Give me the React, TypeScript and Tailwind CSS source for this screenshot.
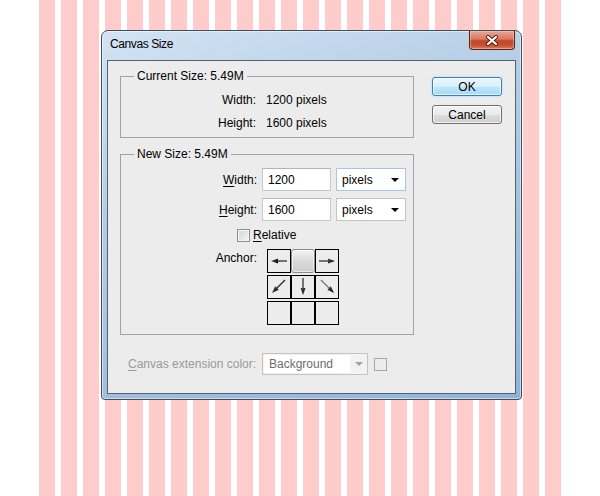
import React from "react";

type ArrowDir = "l" | "r" | "dl" | "d" | "dr";

function AnchorArrow({ dir }: { dir: ArrowDir }) {
  const shapes: Record<ArrowDir, { line: [number, number, number, number]; head: string; stroke: string }> = {
    l: { line: [9, 11, 19, 11], head: "3,11 10,8.5 10,13.5", stroke: "#222" },
    r: { line: [3, 11, 13, 11], head: "19,11 12,8.5 12,13.5", stroke: "#222" },
    d: { line: [11, 2, 11, 13], head: "11,19 8.5,12 13.5,12", stroke: "#222" },
    dl: { line: [17, 4, 8, 13], head: "4,17 10.7,13.8 7.2,10.3", stroke: "#222" },
    dr: { line: [5, 4, 14, 13], head: "18,17 11.3,13.8 14.8,10.3", stroke: "#777" },
  };
  const s = shapes[dir];
  return (
    <svg width="22" height="22" viewBox="0 0 22 22">
      <defs>
        <linearGradient id={`ah-${dir}`} x1="0" y1="0" x2="1" y2="1">
          <stop offset="0" stopColor="#555" />
          <stop offset="1" stopColor="#000" />
        </linearGradient>
      </defs>
      <line x1={s.line[0]} y1={s.line[1]} x2={s.line[2]} y2={s.line[3]} stroke={s.stroke} strokeWidth="1.2" />
      <polygon points={s.head} fill={`url(#ah-${dir})`} />
    </svg>
  );
}

function Cell({ children }: { children?: React.ReactNode }) {
  return (
    <div className="flex h-[24px] w-[24px] items-center justify-center border border-black bg-[#ececec]">
      {children}
    </div>
  );
}

function CloseButton() {
  return (
    <div className="mr-[1px] flex h-[19px] w-[46px] items-center justify-center rounded-b-[4px] border border-t-0 border-[#5e2215] bg-[linear-gradient(to_bottom,#e9a797_0%,#d9785f_45%,#c2432a_55%,#c9512f_80%,#dc8060_100%)] shadow-[inset_0_0_0_1px_rgba(255,210,190,0.45)]">
      <svg width="14" height="11" viewBox="0 0 14 11">
        <path d="M3,2 L11,9 M11,2 L3,9" stroke="#4a1b10" strokeWidth="4" strokeLinecap="round" />
        <path d="M3,2 L11,9 M11,2 L3,9" stroke="#ffffff" strokeWidth="2.2" strokeLinecap="round" />
      </svg>
    </div>
  );
}

function Caret({ color = "#000" }: { color?: string }) {
  return (
    <svg width="8" height="4" viewBox="0 0 8 4">
      <polygon points="0,0 8,0 4,4" fill={color} />
    </svg>
  );
}

function UnitSelect({ focused }: { focused?: boolean }) {
  return (
    <div
      className={
        focused
          ? "ml-[5px] flex h-[23px] w-[70px] items-center justify-between border border-[#a6c6e3] bg-white pl-[5px] pr-[6px]"
          : "ml-[5px] flex h-[23px] w-[70px] items-center justify-between border border-[#c4c4c4] bg-white pl-[5px] pr-[6px]"
      }
    >
      <span>pixels</span>
      <Caret />
    </div>
  );
}

function NumberField({ value }: { value: string }) {
  return (
    <div className="ml-[5px] flex h-[23px] w-[69px] items-center border border-[#c9c9c9] border-t-[#b5b5b5] bg-white pl-[5px]">
      {value}
    </div>
  );
}

export default function App() {
  return (
    <div className="relative h-[496px] w-[600px] overflow-hidden bg-white font-['Liberation_Sans',Arial,sans-serif] text-[12px] leading-[14px] text-black">
      {/* striped canvas behind the dialog */}
      <div className="flex h-full gap-[6px] pl-[39px]">
        {Array.from({ length: 24 }, (_, i) => (
          <div key={i} className="h-full w-[16px] shrink-0 bg-[#ffcccc]" />
        ))}
      </div>

      {/* dialog window */}
      <div className="absolute left-[101px] top-[30px] flex h-[370px] w-[421px] flex-col rounded-t-[7px] rounded-b-[4px] border border-[#3e4d5c] bg-[linear-gradient(160deg,#d3e3f3_0%,#b4cde6_35%,#a0bfdd_70%,#8fb3d8_100%)] px-[5px] pb-[5px] shadow-[inset_0_0_0_1px_rgba(255,255,255,0.5)]">
        <div className="flex h-[29px] shrink-0 items-start justify-between">
          <span className="pl-[3px] pt-[6px] tracking-[-0.4px]">Canvas Size</span>
          <CloseButton />
        </div>

        <div className="flex h-[334px] shrink-0 border border-[#56636f] bg-[#ececec]">
          {/* left column: size groups */}
          <div className="flex flex-col pl-[12px]">
            <fieldset className="mt-[8px] w-[294px] border border-[#a3a3a3] px-0 pb-[6px]">
              <legend className="ml-[13px] px-[3px] leading-[14px]">Current Size: 5.49M</legend>
              <div className="grid grid-cols-[135px_1fr] gap-y-[7px] pt-[9px] leading-[16px]">
                <div className="text-right">Width:</div>
                <div className="pl-[10px]">1200 pixels</div>
                <div className="text-right">Height:</div>
                <div className="pl-[10px]">1600 pixels</div>
              </div>
            </fieldset>

            <fieldset className="mt-[9px] w-[294px] border border-[#a3a3a3] px-0 pb-[9px]">
              <legend className="ml-[13px] px-[3px] leading-[14px]">New Size: 5.49M</legend>
              <div className="flex flex-col pt-[7px]">
                <div className="flex items-center">
                  <div className="w-[136px] text-right">
                    <span className="underline underline-offset-2">W</span>idth:
                  </div>
                  <NumberField value="1200" />
                  <UnitSelect focused />
                </div>
                <div className="mt-[7px] flex items-center">
                  <div className="w-[136px] text-right">
                    <span className="underline underline-offset-2">H</span>eight:
                  </div>
                  <NumberField value="1600" />
                  <UnitSelect />
                </div>
                <div className="mt-[6px] flex h-[16px] items-center pl-[116px]">
                  <div className="h-[13px] w-[13px] border border-[#8e8f8f] bg-[linear-gradient(135deg,#d4d4d4,#f6f6f6)] shadow-[inset_0_0_0_1px_#f4f4f4]" />
                  <span className="ml-[3px]">
                    <span className="underline underline-offset-2">R</span>elative
                  </span>
                </div>
                <div className="mt-[6px] flex items-start">
                  <div className="w-[136px] pt-[2px] text-right">Anchor:</div>
                  <div className="ml-[10px] grid grid-cols-[24px_24px_24px] gap-y-[2px]">
                    <Cell>
                      <AnchorArrow dir="l" />
                    </Cell>
                    <div className="h-[24px] w-[24px] rounded-[3px] border border-[#8c8c8c] bg-[linear-gradient(to_bottom,#f3f3f3,#dadada_50%,#cfcfcf)] shadow-[inset_0_0_0_1px_rgba(255,255,255,0.6)]" />
                    <Cell>
                      <AnchorArrow dir="r" />
                    </Cell>
                    <Cell>
                      <AnchorArrow dir="dl" />
                    </Cell>
                    <Cell>
                      <AnchorArrow dir="d" />
                    </Cell>
                    <Cell>
                      <AnchorArrow dir="dr" />
                    </Cell>
                    <Cell />
                    <Cell />
                    <Cell />
                  </div>
                </div>
              </div>
            </fieldset>

            <div className="mt-[18px] flex items-center pl-[8px]">
              <div className="w-[134px] text-[#9a9a9a]">
                <span className="underline underline-offset-2">C</span>anvas extension color:
              </div>
              <div className="flex h-[22px] w-[106px] items-center border border-[#c3c3c3] bg-[#f2f2f2]">
                <div className="ml-[1px] flex h-[18px] w-[86px] items-center bg-white pl-[5px] text-[#6d6d6d]">
                  Background
                </div>
                <div className="flex flex-1 items-center justify-center">
                  <Caret color="#a0a0a0" />
                </div>
              </div>
              <div className="ml-[6px] h-[13px] w-[13px] border border-[#a8a8a8] bg-[#ececec]" />
            </div>
          </div>

          {/* right column: buttons */}
          <div className="ml-[18px] flex flex-col pt-[16px]">
            <button className="flex h-[19px] w-[70px] items-center justify-center rounded-[3px] border border-[#3c7fb1] bg-[linear-gradient(to_bottom,#eaf6fd_0%,#d9f0fc_50%,#bee6fd_51%,#a7d9f5_100%)] shadow-[inset_0_0_0_1px_rgba(255,255,255,0.7),0_0_2px_#8fd0f5]">
              OK
            </button>
            <button className="mt-[9px] flex h-[19px] w-[70px] items-center justify-center rounded-[3px] border border-[#707070] bg-[linear-gradient(to_bottom,#f2f2f2_0%,#ebebeb_50%,#dddddd_51%,#cfcfcf_100%)] shadow-[inset_0_0_0_1px_rgba(255,255,255,0.7)]">
              Cancel
            </button>
          </div>
        </div>
      </div>
    </div>
  );
}
